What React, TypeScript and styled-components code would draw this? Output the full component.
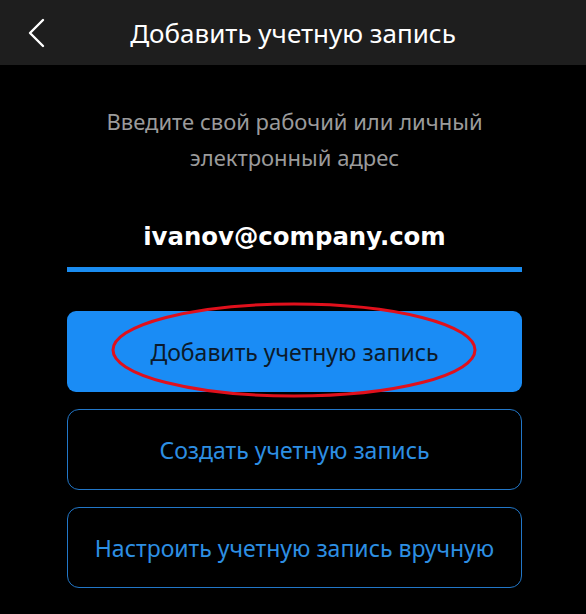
import styled, { createGlobalStyle } from "styled-components";

const GlobalStyle = createGlobalStyle`
  html, body {
    margin: 0;
    padding: 0;
    background: #000000;
  }
  * {
    box-sizing: border-box;
  }
`;

const Screen = styled.div`
  width: 586px;
  height: 614px;
  background: #000000;
  font-family: "Noto Sans", Roboto, "Liberation Sans", sans-serif;
  overflow: hidden;
`;

const Header = styled.header`
  height: 65px;
  background: #1e1e1e;
  display: grid;
  grid-template-columns: 70px 1fr 70px;
  align-items: center;
`;

const BackButton = styled.button`
  background: none;
  border: 0;
  padding: 0 0 0 26px;
  height: 100%;
  display: flex;
  align-items: center;
  cursor: pointer;
`;

const Title = styled.h1`
  margin: 0;
  text-align: center;
  color: #ffffff;
  font-size: 26px;
  font-weight: 400;
`;

const Content = styled.main`
  padding: 0 64px 0 67px;
  display: flex;
  flex-direction: column;
`;

const Hint = styled.p`
  margin: 38px 0 0;
  text-align: center;
  color: #9b9b9b;
  font-size: 22px;
  line-height: 36px;
`;

const EmailField = styled.div`
  margin-top: 47px;
  padding-bottom: 15px;
  border-bottom: 5px solid #1a8cf0;
  text-align: center;
  color: #ffffff;
  font-family: "DejaVu Sans", Verdana, sans-serif;
  font-weight: 700;
  font-size: 24.4px;
  line-height: 30px;
`;

const Actions = styled.div`
  margin-top: 39px;
  display: flex;
  flex-direction: column;
  gap: 17px;
`;

const ActionButton = styled.button<{ $primary?: boolean }>`
  position: relative;
  height: 81px;
  width: 100%;
  border-radius: ${(p) => (p.$primary ? "9px" : "12px")};
  border: ${(p) => (p.$primary ? "0" : "1.5px solid #2277c8")};
  background: ${(p) => (p.$primary ? "#1a8cf5" : "#000000")};
  color: ${(p) => (p.$primary ? "#0c1a2a" : "#2d8fe3")};
  font-family: "Noto Sans", Roboto, "Liberation Sans", sans-serif;
  font-size: 23px;
  cursor: pointer;
`;

const Highlight = styled.svg`
  position: absolute;
  left: 44px;
  top: -9px;
  overflow: visible;
  pointer-events: none;
`;

export default function App() {
  return (
    <Screen>
      <GlobalStyle />
      <Header>
        <BackButton aria-label="Назад">
          <svg width="20" height="30" viewBox="0 0 20 30" fill="none">
            <path
              d="M17 2 L4 15 L17 28"
              stroke="#ffffff"
              strokeWidth="2.4"
              strokeLinecap="round"
              strokeLinejoin="round"
            />
          </svg>
        </BackButton>
        <Title>Добавить учетную запись</Title>
        <div />
      </Header>
      <Content>
        <Hint>
          Введите свой рабочий или личный
          <br />
          электронный адрес
        </Hint>
        <EmailField>ivanov@company.com</EmailField>
        <Actions>
          <ActionButton $primary>
            Добавить учетную запись
            <Highlight width="366" height="96" viewBox="0 0 366 96">
              <ellipse
                cx="183"
                cy="48"
                rx="181"
                ry="46"
                fill="none"
                stroke="#e0101c"
                strokeWidth="3"
              />
            </Highlight>
          </ActionButton>
          <ActionButton>Создать учетную запись</ActionButton>
          <ActionButton>Настроить учетную запись вручную</ActionButton>
        </Actions>
      </Content>
    </Screen>
  );
}
